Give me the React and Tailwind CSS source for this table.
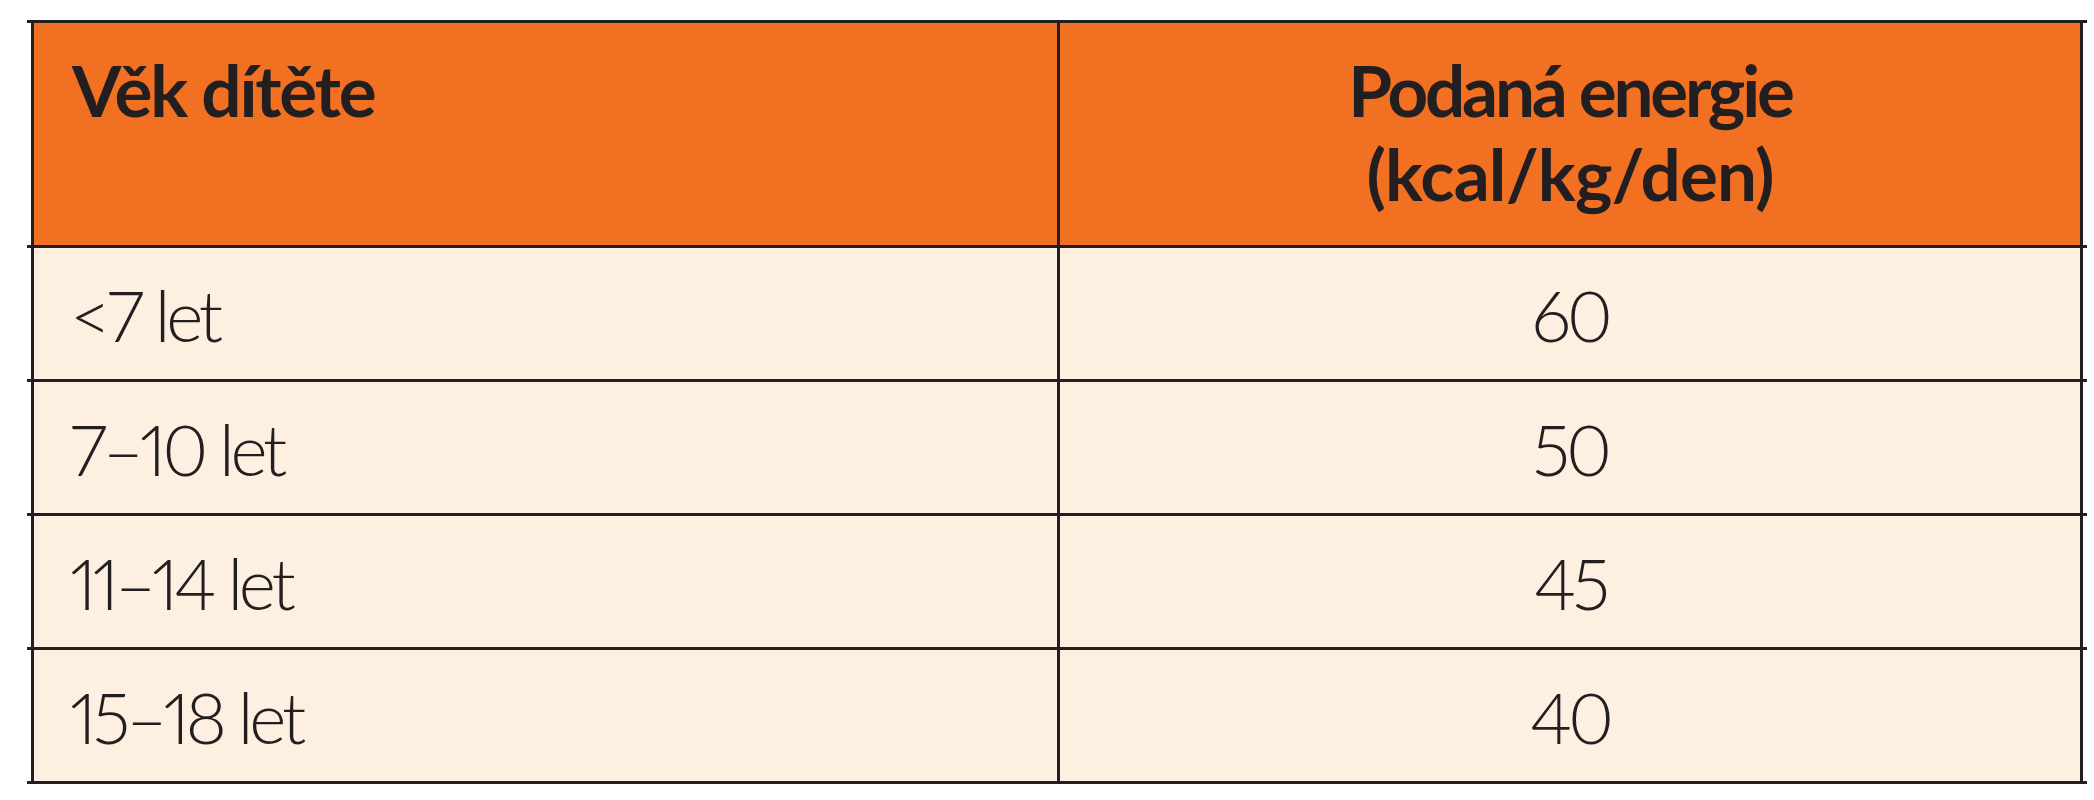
const rows = [
  { age: "<7 let", energy: "60" },
  { age: "7–10 let", energy: "50" },
  { age: "11–14 let", energy: "45" },
  { age: "15–18 let", energy: "40" },
];

export default function App() {
  return (
    <div
      className="min-h-[800px] w-[2094px] bg-white pt-[20px] text-[#231f20]"
      style={{ fontFamily: "Lato, 'Liberation Sans', sans-serif" }}
    >
      <div className="ml-[27px] w-[2060px] border-t-[3px] border-[#231f20]">
        {/* header */}
        <div className="border-b-[3px] border-[#231f20]">
          <div className="mx-[4px] flex h-[222px] bg-[#f27022] text-[71px] font-bold leading-[84px]">
            <div className="w-[1026px] border-l-[3px] border-[#231f20] pl-[38px] pt-[25px] tracking-[-0.03em]">
              Věk dítěte
            </div>
            <div className="w-[1026px] border-x-[3px] border-[#231f20] pt-[25px] text-center">
              <div className="tracking-[-0.045em]">Podaná energie</div>
              <div className="tracking-[-0.012em]">(kcal/kg/den)</div>
            </div>
          </div>
        </div>

        {rows.map((r) => (
          <div key={r.age} className="border-b-[3px] border-[#231f20]">
            <div className="mx-[4px] flex h-[131px] bg-[#fdf0e1] text-[71px] font-light leading-[84px] tracking-[-0.06em] [font-variant-numeric:proportional-nums]">
              <div className="w-[1026px] border-l-[3px] border-[#231f20] pl-[36px] pt-[25px]">
                {r.age}
              </div>
              <div className="w-[1026px] border-x-[3px] border-[#231f20] pt-[25px] text-center">
                {r.energy}
              </div>
            </div>
          </div>
        ))}
      </div>
    </div>
  );
}
